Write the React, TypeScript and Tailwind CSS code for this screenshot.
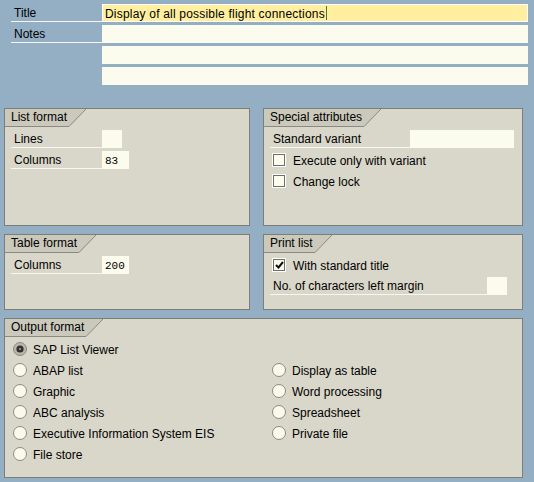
import type { ReactNode } from "react"

const Field = ({ w, value, mono }: { w: string; value?: string; mono?: boolean }) => (
  <div
    className={`${w} h-[18px] bg-[#fbfbee] leading-[20px] px-[3px] ${
      mono ? "font-['Liberation_Mono',monospace] text-[11px]" : ""
    }`}
  >
    {value}
  </div>
)

const Label = ({ w, text }: { w: string; text: string }) => (
  <div className={`${w} h-[18px] border-b border-[#f7f7f2] pl-[3px] leading-[19px]`}>{text}</div>
)

const Check = ({ checked, text }: { checked?: boolean; text: string }) => (
  <div className="flex h-[18px] items-center pl-[8px]">
    <span className="flex h-[14px] w-[14px] bg-white p-[1px]">
      <span className="flex h-full w-full items-center justify-center border border-[#6f6f68] bg-[#fbfbee]">
        {checked && (
          <svg width="9" height="8" viewBox="0 0 9 8">
            <path d="M1 4 L3.5 6.5 L8 1" stroke="#111" strokeWidth="2" fill="none" />
          </svg>
        )}
      </span>
    </span>
    <span className="ml-[7px] pt-[2px] leading-[18px]">{text}</span>
  </div>
)

const Radio = ({ on, text }: { on?: boolean; text: string }) => (
  <div className="flex h-[18px] items-center pl-[8px]">
    <svg width="14" height="14" viewBox="0 0 14 14">
      <circle cx="7" cy="7" r="6.5" fill={on ? "#b7b6aa" : "#fafaec"} stroke="#8c8b82" />
      {on && <circle cx="7" cy="7" r="3.6" fill="#2f2f2f" />}
      {on && <circle cx="7" cy="7" r="1.2" fill="#8a8a8a" />}
    </svg>
    <span className="ml-[6px] pt-[2px] leading-[18px]">{text}</span>
  </div>
)

const Panel = ({ title, h, w, children }: { title: string; h: string; w: string; children: ReactNode }) => (
  <div className={`${w} ${h} border border-[#7e7e78] bg-[#d9d7ca]`}>
    <div className="flex h-[18px]">
      <div className="h-[18px] border-b border-[#8a8a82] bg-[#cac9bb] pl-[6px] pr-[2px] leading-[17px]">
        {title}
      </div>
      <svg width="17" height="18" viewBox="0 0 17 18" className="block">
        <polygon points="0,0 17,0 0,17.5" fill="#cac9bb" />
        <line x1="0" y1="17.5" x2="17" y2="0" stroke="#8a8a82" strokeWidth="1" />
      </svg>
    </div>
    <div className="mt-[3px] flex flex-col gap-[3px]">{children}</div>
  </div>
)

export default function App() {
  return (
    <div className="h-[482px] w-[534px] overflow-hidden bg-[#94afc3] font-['Liberation_Sans',Arial,sans-serif] text-[12px] text-black">
      {/* header rows */}
      <div className="flex flex-col gap-[3px] pt-[4px]">
        <div className="flex">
          <div className="ml-[11px]">
            <Label w="w-[91px]" text="Title" />
          </div>
          <div className="flex h-[18px] w-[426px] items-center border border-white bg-[#ffef9e] pl-[2px]">
            <span className="pt-[2px] leading-[18px] tracking-[0.2px]">Display of all possible flight connections</span>
            <span className="ml-[1px] inline-block h-[14px] w-[1px] bg-[#4b7a26]" />
          </div>
        </div>
        <div className="flex">
          <div className="ml-[11px]">
            <Label w="w-[91px]" text="Notes" />
          </div>
          <Field w="w-[426px]" />
        </div>
        <div className="flex pl-[102px]">
          <Field w="w-[426px]" />
        </div>
        <div className="flex pl-[102px]">
          <Field w="w-[426px]" />
        </div>
      </div>

      <div className="mt-[23px] flex flex-col gap-[8px] pl-[4px]">
        <div className="flex gap-[13px]">
          <Panel title="List format" w="w-[246px]" h="h-[118px]">
            <div className="flex pl-[6px]">
              <Label w="w-[91px]" text="Lines" />
              <Field w="w-[20px]" />
            </div>
            <div className="flex pl-[6px]">
              <Label w="w-[91px]" text="Columns" />
              <Field w="w-[27px]" value="83" mono />
            </div>
          </Panel>
          <Panel title="Special attributes" w="w-[260px]" h="h-[118px]">
            <div className="flex pl-[6px]">
              <Label w="w-[140px]" text="Standard variant" />
              <Field w="w-[104px]" />
            </div>
            <Check text="Execute only with variant" />
            <Check text="Change lock" />
          </Panel>
        </div>

        <div className="flex gap-[13px]">
          <Panel title="Table format" w="w-[246px]" h="h-[76px]">
            <div className="flex pl-[6px]">
              <Label w="w-[91px]" text="Columns" />
              <Field w="w-[27px]" value="200" mono />
            </div>
          </Panel>
          <Panel title="Print list" w="w-[260px]" h="h-[76px]">
            <Check checked text="With standard title" />
            <div className="flex pl-[6px]">
              <Label w="w-[217px]" text="No. of characters left margin" />
              <Field w="w-[20px]" />
            </div>
          </Panel>
        </div>

        <Panel title="Output format" w="w-[519px]" h="h-[160px]">
          <div className="flex">
            <div className="flex w-[259px] flex-col gap-[3px]">
              <Radio on text="SAP List Viewer" />
              <Radio text="ABAP list" />
              <Radio text="Graphic" />
              <Radio text="ABC analysis" />
              <Radio text="Executive Information System EIS" />
              <Radio text="File store" />
            </div>
            <div className="mt-[21px] flex flex-col gap-[3px]">
              <Radio text="Display as table" />
              <Radio text="Word processing" />
              <Radio text="Spreadsheet" />
              <Radio text="Private file" />
            </div>
          </div>
        </Panel>
      </div>
    </div>
  )
}
